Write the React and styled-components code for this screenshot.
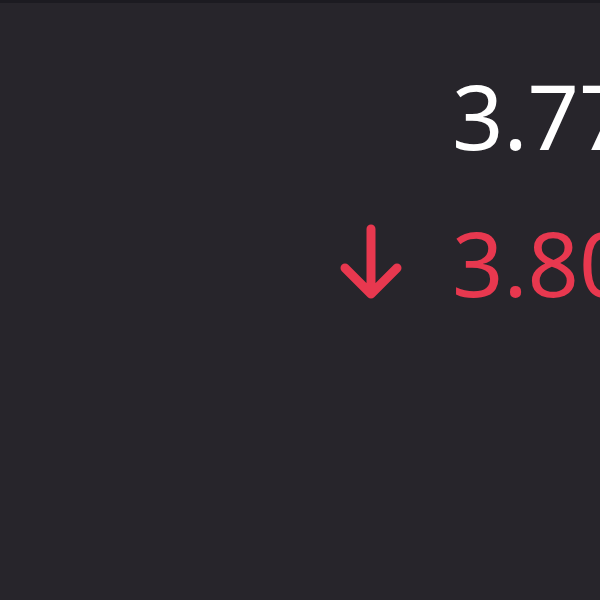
import React from "react";
import styled, { createGlobalStyle } from "styled-components";

const Global = createGlobalStyle`
  html, body { margin: 0; padding: 0; background: #27252b; overflow: hidden; }
  body { font-family: "Noto Sans", "Open Sans", sans-serif; }
`;

const Page = styled.div`
  width: 600px;
  height: 600px;
  box-sizing: border-box;
  border-top: 3px solid #1c1b21;
  background: #27252b;
  overflow: hidden;
  display: flex;
  flex-direction: column;
  padding: 49px 0 0 340px;
  gap: 21px;
`;

const Row = styled.div`
  display: grid;
  grid-template-columns: 62px max-content;
  column-gap: 50px;
  align-items: center;
  white-space: nowrap;
`;

const Value = styled.span`
  grid-column: 2;
  font-size: 90px;
  line-height: 1.4;
  font-weight: 400;
  color: ${(p) => p.color};
`;

const ArrowDown = ({ color }) => (
  <svg width="62" height="78" viewBox="0 0 62 78" fill="none">
    <path
      d="M31 6 V70 M5 45 L31 71 L57 45"
      stroke={color}
      strokeWidth="9"
      strokeLinecap="round"
      strokeLinejoin="round"
    />
  </svg>
);

export default function App() {
  return (
    <>
      <Global />
      <Page>
        <Row>
          <Value color="#ffffff">3.77</Value>
        </Row>
        <Row>
          <ArrowDown color="#e8384f" />
          <Value color="#e8384f">3.80</Value>
        </Row>
      </Page>
    </>
  );
}
